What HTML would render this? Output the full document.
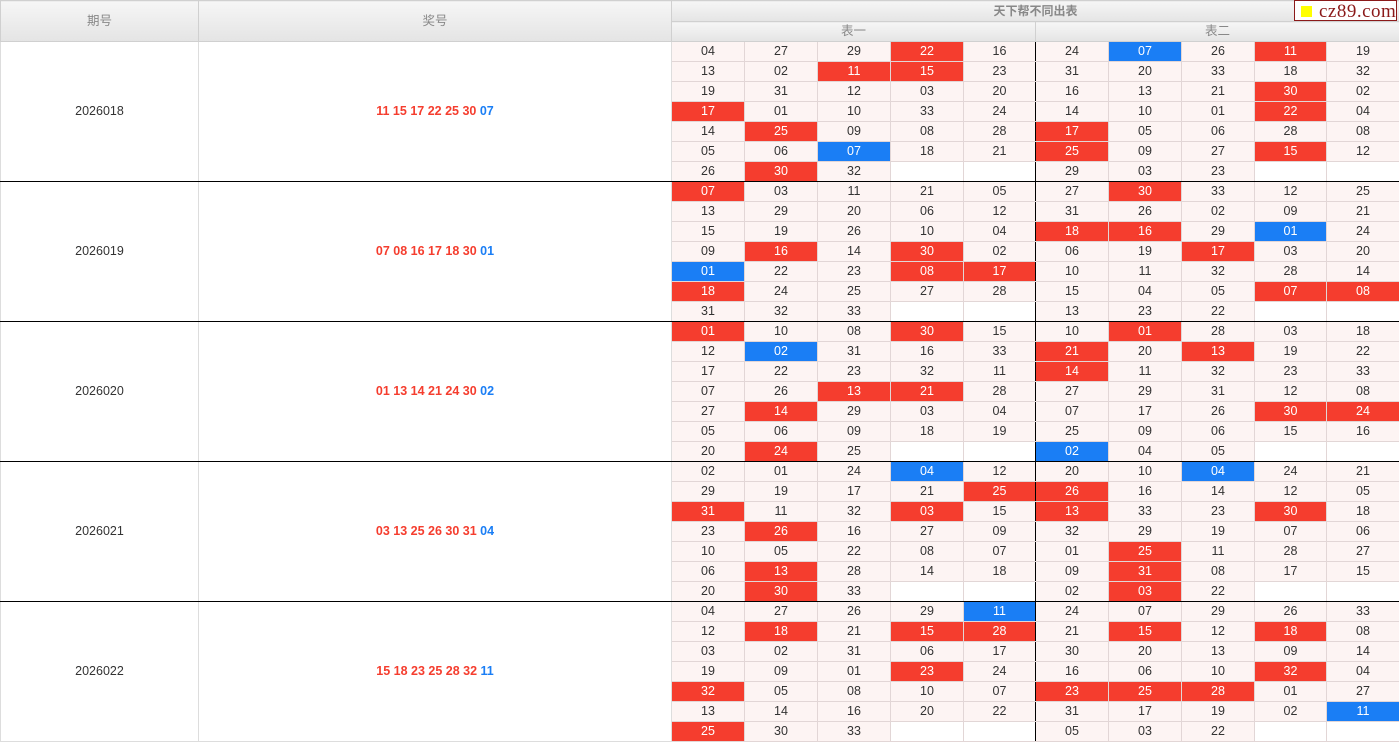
<!DOCTYPE html>
<html><head><meta charset="utf-8"><style>
body{margin:0;background:#fff;font-family:"Liberation Sans","Noto Sans CJK SC",sans-serif;}
table{border-collapse:collapse;table-layout:fixed;width:1399px;position:absolute;left:0;top:0}
td,th{padding:0;text-align:center;font-size:12.5px;color:#333;border:1px solid #e2d6d6;height:19px;line-height:19px;overflow:hidden;white-space:nowrap}
th{background:linear-gradient(#f6f6f6,#e4e4e4);color:#888;font-weight:bold;font-size:12px;border-color:#d0d0d0;height:19px;line-height:19px}
tr.h1 th{height:20px;line-height:20px}
th.big{font-weight:normal;font-size:12.5px}
td.c{background:#fdf4f3}
td.e{background:#fff}
td.r{background:#f53d2e;color:#fff}
td.b{background:#1a7ef5;color:#fff}
td.p,td.n{background:#fff;border-color:#ddd}
td.n{font-weight:bold;color:#f53d2e;font-size:12.5px}
td.n span{color:#1a7ef5}
tr.g td{border-bottom:1px solid #000}
td.d{border-right:1px solid #000}
#logo{position:absolute;left:1294px;top:0;width:103px;height:21px;border:1px solid #8b1a1a;background:#fff;font-family:"Liberation Serif",serif;font-size:19px;color:#8b1a1a;line-height:21px;box-sizing:border-box;padding-left:24px;letter-spacing:0.5px}
#logo i{position:absolute;left:6px;top:5px;width:11px;height:11px;background:#ff0}
</style></head><body>
<table>
<colgroup><col style="width:198px"><col style="width:473px"><col style="width:73px"><col style="width:73px"><col style="width:73px"><col style="width:73px"><col style="width:72px"><col style="width:73px"><col style="width:73px"><col style="width:73px"><col style="width:72px"><col style="width:73px"></colgroup>
<tr class="h1"><th rowspan="2" class="big">期号</th><th rowspan="2" class="big">奖号</th><th colspan="10">天下帮不同出表</th></tr>
<tr><th colspan="5" class="big">表一</th><th colspan="5" class="big">表二</th></tr>

<tr><td class="p" rowspan="7" style="border-bottom:1px solid #000">2026018</td><td class="n" rowspan="7" style="border-bottom:1px solid #000">11 15 17 22 25 30 <span>07</span></td><td class="c">04</td><td class="c">27</td><td class="c">29</td><td class="r">22</td><td class="c d">16</td><td class="c">24</td><td class="b">07</td><td class="c">26</td><td class="r">11</td><td class="c">19</td></tr>
<tr><td class="c">13</td><td class="c">02</td><td class="r">11</td><td class="r">15</td><td class="c d">23</td><td class="c">31</td><td class="c">20</td><td class="c">33</td><td class="c">18</td><td class="c">32</td></tr>
<tr><td class="c">19</td><td class="c">31</td><td class="c">12</td><td class="c">03</td><td class="c d">20</td><td class="c">16</td><td class="c">13</td><td class="c">21</td><td class="r">30</td><td class="c">02</td></tr>
<tr><td class="r">17</td><td class="c">01</td><td class="c">10</td><td class="c">33</td><td class="c d">24</td><td class="c">14</td><td class="c">10</td><td class="c">01</td><td class="r">22</td><td class="c">04</td></tr>
<tr><td class="c">14</td><td class="r">25</td><td class="c">09</td><td class="c">08</td><td class="c d">28</td><td class="r">17</td><td class="c">05</td><td class="c">06</td><td class="c">28</td><td class="c">08</td></tr>
<tr><td class="c">05</td><td class="c">06</td><td class="b">07</td><td class="c">18</td><td class="c d">21</td><td class="r">25</td><td class="c">09</td><td class="c">27</td><td class="r">15</td><td class="c">12</td></tr>
<tr class="g"><td class="c">26</td><td class="r">30</td><td class="c">32</td><td class="e"></td><td class="e d"></td><td class="c">29</td><td class="c">03</td><td class="c">23</td><td class="e"></td><td class="e"></td></tr>

<tr><td class="p" rowspan="7" style="border-bottom:1px solid #000">2026019</td><td class="n" rowspan="7" style="border-bottom:1px solid #000">07 08 16 17 18 30 <span>01</span></td><td class="r">07</td><td class="c">03</td><td class="c">11</td><td class="c">21</td><td class="c d">05</td><td class="c">27</td><td class="r">30</td><td class="c">33</td><td class="c">12</td><td class="c">25</td></tr>
<tr><td class="c">13</td><td class="c">29</td><td class="c">20</td><td class="c">06</td><td class="c d">12</td><td class="c">31</td><td class="c">26</td><td class="c">02</td><td class="c">09</td><td class="c">21</td></tr>
<tr><td class="c">15</td><td class="c">19</td><td class="c">26</td><td class="c">10</td><td class="c d">04</td><td class="r">18</td><td class="r">16</td><td class="c">29</td><td class="b">01</td><td class="c">24</td></tr>
<tr><td class="c">09</td><td class="r">16</td><td class="c">14</td><td class="r">30</td><td class="c d">02</td><td class="c">06</td><td class="c">19</td><td class="r">17</td><td class="c">03</td><td class="c">20</td></tr>
<tr><td class="b">01</td><td class="c">22</td><td class="c">23</td><td class="r">08</td><td class="r d">17</td><td class="c">10</td><td class="c">11</td><td class="c">32</td><td class="c">28</td><td class="c">14</td></tr>
<tr><td class="r">18</td><td class="c">24</td><td class="c">25</td><td class="c">27</td><td class="c d">28</td><td class="c">15</td><td class="c">04</td><td class="c">05</td><td class="r">07</td><td class="r">08</td></tr>
<tr class="g"><td class="c">31</td><td class="c">32</td><td class="c">33</td><td class="e"></td><td class="e d"></td><td class="c">13</td><td class="c">23</td><td class="c">22</td><td class="e"></td><td class="e"></td></tr>

<tr><td class="p" rowspan="7" style="border-bottom:1px solid #000">2026020</td><td class="n" rowspan="7" style="border-bottom:1px solid #000">01 13 14 21 24 30 <span>02</span></td><td class="r">01</td><td class="c">10</td><td class="c">08</td><td class="r">30</td><td class="c d">15</td><td class="c">10</td><td class="r">01</td><td class="c">28</td><td class="c">03</td><td class="c">18</td></tr>
<tr><td class="c">12</td><td class="b">02</td><td class="c">31</td><td class="c">16</td><td class="c d">33</td><td class="r">21</td><td class="c">20</td><td class="r">13</td><td class="c">19</td><td class="c">22</td></tr>
<tr><td class="c">17</td><td class="c">22</td><td class="c">23</td><td class="c">32</td><td class="c d">11</td><td class="r">14</td><td class="c">11</td><td class="c">32</td><td class="c">23</td><td class="c">33</td></tr>
<tr><td class="c">07</td><td class="c">26</td><td class="r">13</td><td class="r">21</td><td class="c d">28</td><td class="c">27</td><td class="c">29</td><td class="c">31</td><td class="c">12</td><td class="c">08</td></tr>
<tr><td class="c">27</td><td class="r">14</td><td class="c">29</td><td class="c">03</td><td class="c d">04</td><td class="c">07</td><td class="c">17</td><td class="c">26</td><td class="r">30</td><td class="r">24</td></tr>
<tr><td class="c">05</td><td class="c">06</td><td class="c">09</td><td class="c">18</td><td class="c d">19</td><td class="c">25</td><td class="c">09</td><td class="c">06</td><td class="c">15</td><td class="c">16</td></tr>
<tr class="g"><td class="c">20</td><td class="r">24</td><td class="c">25</td><td class="e"></td><td class="e d"></td><td class="b">02</td><td class="c">04</td><td class="c">05</td><td class="e"></td><td class="e"></td></tr>

<tr><td class="p" rowspan="7" style="border-bottom:1px solid #000">2026021</td><td class="n" rowspan="7" style="border-bottom:1px solid #000">03 13 25 26 30 31 <span>04</span></td><td class="c">02</td><td class="c">01</td><td class="c">24</td><td class="b">04</td><td class="c d">12</td><td class="c">20</td><td class="c">10</td><td class="b">04</td><td class="c">24</td><td class="c">21</td></tr>
<tr><td class="c">29</td><td class="c">19</td><td class="c">17</td><td class="c">21</td><td class="r d">25</td><td class="r">26</td><td class="c">16</td><td class="c">14</td><td class="c">12</td><td class="c">05</td></tr>
<tr><td class="r">31</td><td class="c">11</td><td class="c">32</td><td class="r">03</td><td class="c d">15</td><td class="r">13</td><td class="c">33</td><td class="c">23</td><td class="r">30</td><td class="c">18</td></tr>
<tr><td class="c">23</td><td class="r">26</td><td class="c">16</td><td class="c">27</td><td class="c d">09</td><td class="c">32</td><td class="c">29</td><td class="c">19</td><td class="c">07</td><td class="c">06</td></tr>
<tr><td class="c">10</td><td class="c">05</td><td class="c">22</td><td class="c">08</td><td class="c d">07</td><td class="c">01</td><td class="r">25</td><td class="c">11</td><td class="c">28</td><td class="c">27</td></tr>
<tr><td class="c">06</td><td class="r">13</td><td class="c">28</td><td class="c">14</td><td class="c d">18</td><td class="c">09</td><td class="r">31</td><td class="c">08</td><td class="c">17</td><td class="c">15</td></tr>
<tr class="g"><td class="c">20</td><td class="r">30</td><td class="c">33</td><td class="e"></td><td class="e d"></td><td class="c">02</td><td class="r">03</td><td class="c">22</td><td class="e"></td><td class="e"></td></tr>

<tr><td class="p" rowspan="7">2026022</td><td class="n" rowspan="7">15 18 23 25 28 32 <span>11</span></td><td class="c">04</td><td class="c">27</td><td class="c">26</td><td class="c">29</td><td class="b d">11</td><td class="c">24</td><td class="c">07</td><td class="c">29</td><td class="c">26</td><td class="c">33</td></tr>
<tr><td class="c">12</td><td class="r">18</td><td class="c">21</td><td class="r">15</td><td class="r d">28</td><td class="c">21</td><td class="r">15</td><td class="c">12</td><td class="r">18</td><td class="c">08</td></tr>
<tr><td class="c">03</td><td class="c">02</td><td class="c">31</td><td class="c">06</td><td class="c d">17</td><td class="c">30</td><td class="c">20</td><td class="c">13</td><td class="c">09</td><td class="c">14</td></tr>
<tr><td class="c">19</td><td class="c">09</td><td class="c">01</td><td class="r">23</td><td class="c d">24</td><td class="c">16</td><td class="c">06</td><td class="c">10</td><td class="r">32</td><td class="c">04</td></tr>
<tr><td class="r">32</td><td class="c">05</td><td class="c">08</td><td class="c">10</td><td class="c d">07</td><td class="r">23</td><td class="r">25</td><td class="r">28</td><td class="c">01</td><td class="c">27</td></tr>
<tr><td class="c">13</td><td class="c">14</td><td class="c">16</td><td class="c">20</td><td class="c d">22</td><td class="c">31</td><td class="c">17</td><td class="c">19</td><td class="c">02</td><td class="b">11</td></tr>
<tr><td class="r">25</td><td class="c">30</td><td class="c">33</td><td class="e"></td><td class="e d"></td><td class="c">05</td><td class="c">03</td><td class="c">22</td><td class="e"></td><td class="e"></td></tr>
</table>
<div id="logo"><i></i>cz89.com</div>
</body></html>
